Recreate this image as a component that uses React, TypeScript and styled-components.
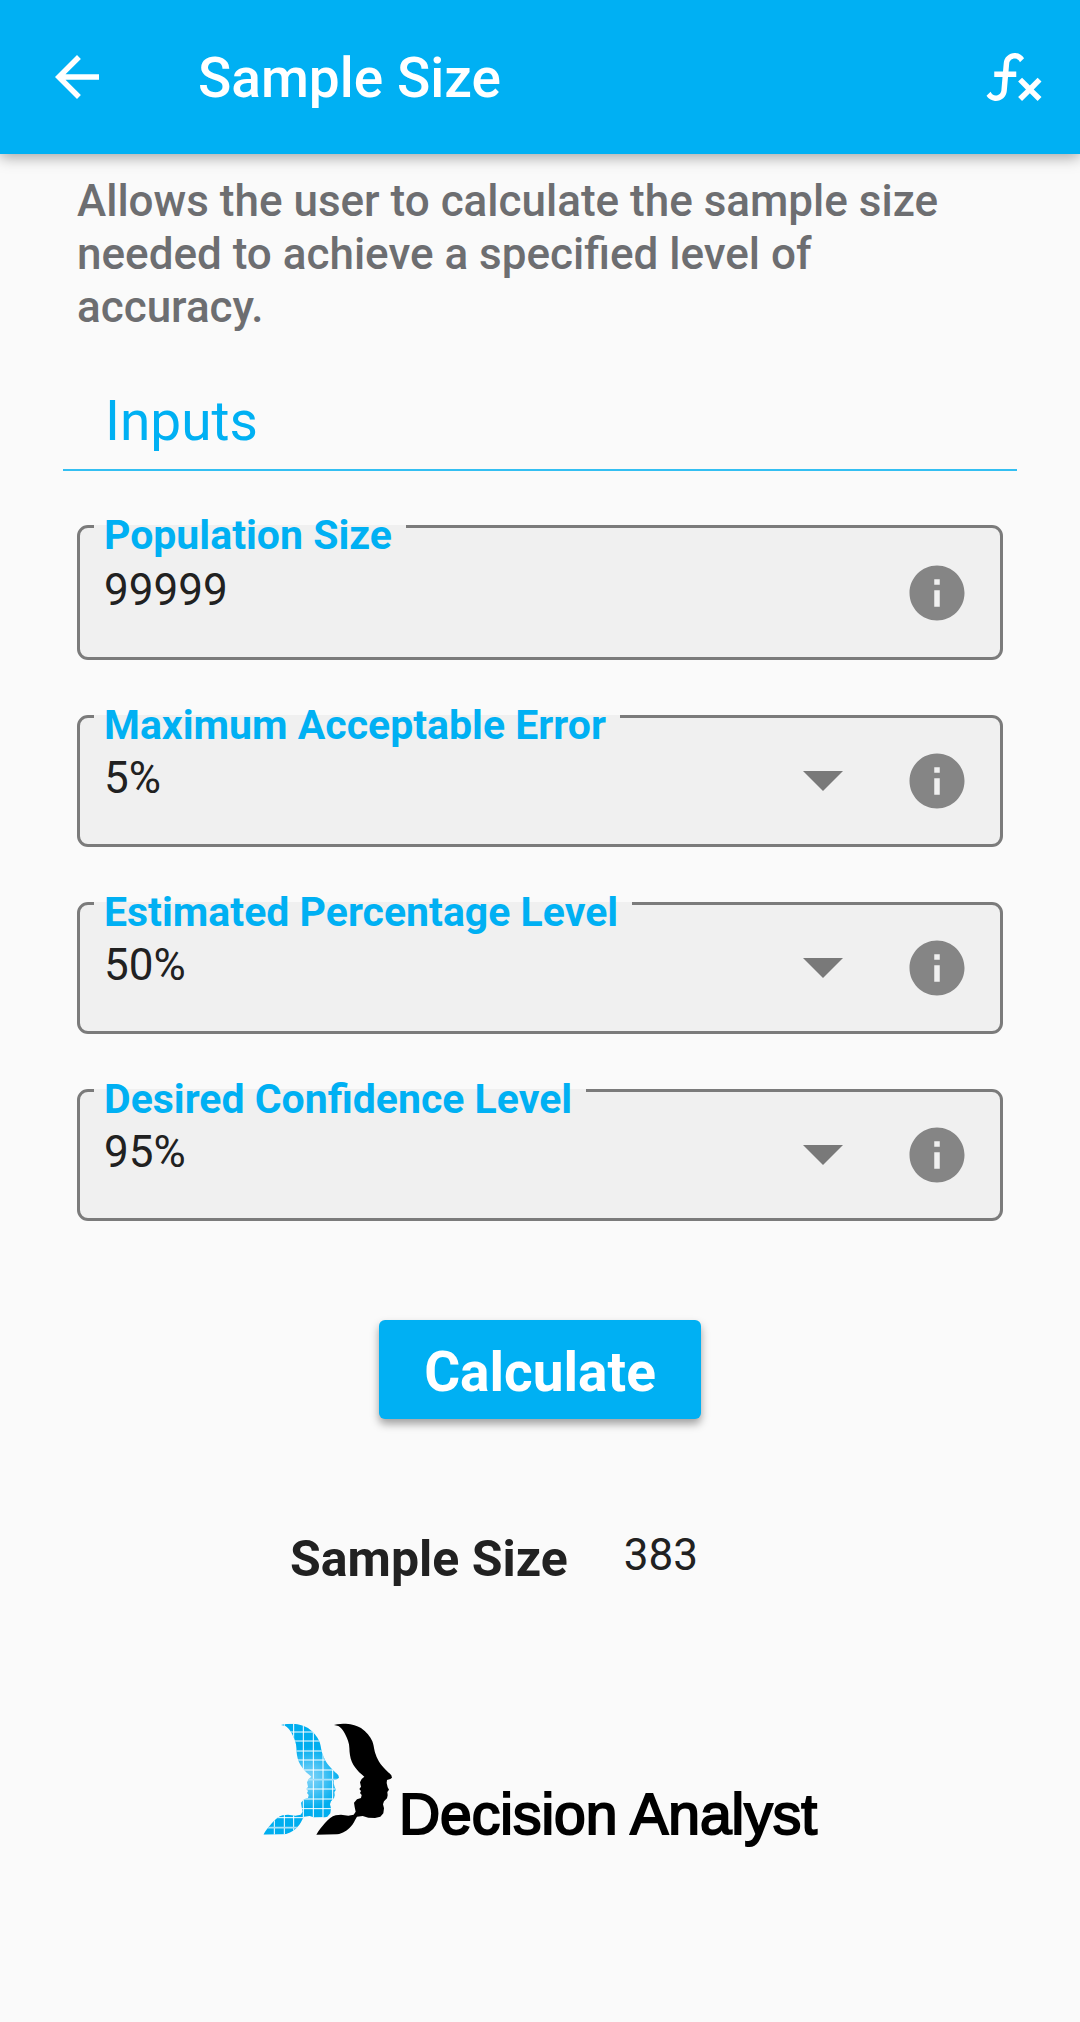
import React, { useState } from "react";
import styled, { createGlobalStyle } from "styled-components";
import { MdArrowBack, MdInfo } from "react-icons/md";

const BLUE = "#00b0f3";
const INK = "#212121";
const SURFACE = "#f0f0f0";
const OUTLINE = "#7b7b7b";

const GlobalStyle = createGlobalStyle`
  *, *::before, *::after { box-sizing: border-box; }
  body {
    margin: 0;
    background: #fafafa;
    color: ${INK};
    font-family: Roboto, "Noto Sans", sans-serif;
  }
  button, input, select { font: inherit; color: inherit; }
`;

const Page = styled.div`
  min-height: 100vh;
`;

const AppBar = styled.header`
  display: flex;
  align-items: center;
  padding: 44px 33px 44px 44px;
  background: ${BLUE};
  color: #fff;
  box-shadow: 0 3px 14px rgba(0, 0, 0, 0.36);
`;

const IconButton = styled.button`
  display: flex;
  flex: none;
  padding: 0;
  border: 0;
  background: none;
  cursor: pointer;
`;

const Title = styled.h1`
  flex: 1;
  margin: 0;
  padding: 2px 0 0 88px;
  font-size: 55px;
  line-height: 64px;
  font-weight: 500;
`;

const Content = styled.main`
  padding: 21px 77px 0;
`;

const Description = styled.p`
  margin: 0;
  color: #6d6e71;
  font-size: 44px;
  line-height: 53px;
  font-weight: 500;
`;

const SectionTitle = styled.h2`
  margin: 55px -14px 0;
  padding: 0 42px 16px;
  border-bottom: 2px solid #33bff2;
  color: ${BLUE};
  font-size: 55px;
  line-height: 64px;
  font-weight: 400;
`;

const Form = styled.form`
  display: flex;
  flex-direction: column;
  gap: 55px;
  padding-top: 54px;
`;

const FieldBox = styled.div<{ $tall?: boolean }>`
  position: relative;
  display: flex;
  align-items: center;
  height: ${(p) => (p.$tall ? 135 : 132)}px;
  padding: 0 30px 0 24px;
  border: 3px solid ${OUTLINE};
  border-radius: 11px;
  background: ${SURFACE};
  color: #858585;
`;

const FloatingLabel = styled.label`
  position: absolute;
  top: -3px;
  left: 14px;
  padding: 0 14px 0 10px;
  background: ${SURFACE};
  color: ${BLUE};
  font-size: 41px;
  line-height: 20px;
  font-weight: 700;
  white-space: nowrap;
`;

const Control = styled.input`
  flex: 1;
  min-width: 0;
  height: 100%;
  padding: 0 0 6px;
  border: 0;
  outline: 0;
  background: none;
  color: ${INK};
  font-size: 44px;
`;

const SelectWrap = styled.div`
  display: grid;
  flex: 1;
  height: 100%;
  align-items: center;
  margin-right: 61px;
  > * { grid-area: 1 / 1; }
`;

const Select = styled.select`
  width: 100%;
  height: 100%;
  padding: 0 0 6px;
  border: 0;
  outline: 0;
  appearance: none;
  background: none;
  color: ${INK};
  font-size: 44px;
`;

const Caret = styled.svg`
  justify-self: end;
  pointer-events: none;
  fill: #797979;
`;

const Submit = styled.button`
  align-self: center;
  margin-top: 44px;
  padding: 20px 45px 15px;
  border: 0;
  border-radius: 6px;
  background: ${BLUE};
  color: #fff;
  font-size: 55px;
  line-height: 64px;
  font-weight: 700;
  box-shadow: 0 5px 8px rgba(0, 0, 0, 0.36);
  cursor: pointer;
`;

const Result = styled.div`
  display: flex;
  align-items: flex-start;
  justify-content: center;
  gap: 56px;
  padding: 110px 92px 0 0;
`;

const ResultLabel = styled.span`
  font-size: 50px;
  line-height: 60px;
  font-weight: 700;
`;

const ResultValue = styled.output`
  font-size: 44px;
  line-height: 52px;
`;

const Brand = styled.div`
  display: flex;
  align-items: flex-end;
  justify-content: center;
  gap: 6px;
  padding: 134px 0 55px;
  color: #000;
`;

const BrandName = styled.span`
  font-family: "Liberation Sans", Arial, sans-serif;
  font-size: 57px;
  line-height: 42px;
  white-space: nowrap;
  -webkit-text-stroke: 2px #000;
`;

const PROFILE =
  "M249 46C262 42 274 42 285 42C304 43 318 48 330 55C346 66 358 80 364 95C370 112 369 122 374 134C380 154 394 172 410 186C414 190 419 193 421 197L423 204L418 208L408 211L407 220L410 233L414 240L409 247L410 257L408 266L399 275L396 284L399 296L397 311L388 321L372 325L352 324L335 319L318 321C310 334 307 343 299 351C290 361 275 371 258 374L196 375C203 363 213 350 222 340C233 328 242 320 254 317L270 315L292 318L308 315L314 306L311 292L309 279L318 269L330 265L332 256L327 250L330 244L325 238L330 231L327 218L332 208L340 201C328 192 320 184 312 173C304 162 299 150 297 137C294 123 297 108 291 93C283 72 274 56 262 49Z";

const COLUMNS = [70, 100, 128, 157, 187, 216, 245];
const ROWS = [67, 94, 124, 151, 181, 238, 268, 297, 324];

function Faces() {
  return (
    <svg width="130" height="112" viewBox="36 40 390 336" aria-hidden="true">
      <defs>
        <radialGradient id="glow" gradientUnits="userSpaceOnUse" cx="176" cy="205" r="92">
          <stop offset="0" stopColor="#7dd3f8" />
          <stop offset="0.35" stopColor="#5ac8f6" />
          <stop offset="1" stopColor="#00aeef" />
        </radialGradient>
        <clipPath id="profile">
          <path d={PROFILE} transform="translate(-159 0)" />
        </clipPath>
      </defs>
      <g clipPath="url(#profile)">
        <rect x="30" y="36" width="240" height="342" fill="url(#glow)" />
        <g stroke="#fff" strokeWidth="3">
          {COLUMNS.map((x) => (
            <path key={x} d={`M${x} 36V378`} />
          ))}
          {ROWS.map((y) => (
            <path key={y} d={`M30 ${y}H270`} />
          ))}
        </g>
        <path d="M30 210H270M30 354H270" stroke="#a8e1fa" strokeWidth="5" />
      </g>
      <path d={PROFILE} />
    </svg>
  );
}

function FunctionIcon() {
  return (
    <svg width="66" height="66" viewBox="0 0 24 24" fill="currentColor" aria-hidden="true">
      <path d="M12.42,5.29C11.32,5.19 10.35,6 10.25,7.11L10,10H12.82V12H9.82L9.38,17.07C9.18,19.27 7.24,20.9 5.04,20.7C3.79,20.59 2.66,19.9 2,18.83L3.5,17.33C3.83,18.38 4.96,18.97 6,18.63C6.78,18.39 7.33,17.7 7.4,16.89L7.82,12H4.82V10H8L8.27,6.93C8.46,4.73 10.39,3.1 12.6,3.28C13.86,3.39 15,4.09 15.66,5.17L14.16,6.67C13.91,5.9 13.23,5.36 12.42,5.29M22,13.65L20.59,12.24L17.76,15.07L14.93,12.24L13.5,13.65L16.35,16.5L13.5,19.31L14.93,20.72L17.76,17.89L20.59,20.72L22,19.31L19.17,16.5L22,13.65Z" />
    </svg>
  );
}

function InfoButton({ topic }: { topic: string }) {
  return (
    <IconButton type="button" aria-label={`About ${topic}`}>
      <MdInfo size={66} />
    </IconButton>
  );
}

interface SelectFieldProps {
  id: string;
  label: string;
  options: string[];
  initial: string;
}

function SelectField({ id, label, options, initial }: SelectFieldProps) {
  const [value, setValue] = useState(initial);
  return (
    <FieldBox>
      <FloatingLabel htmlFor={id}>{label}</FloatingLabel>
      <SelectWrap>
        <Select id={id} value={value} onChange={(e) => setValue(e.target.value)}>
          {options.map((o) => (
            <option key={o}>{o}</option>
          ))}
        </Select>
        <Caret width="40" height="20" viewBox="0 0 40 20" aria-hidden="true">
          <path d="M0 0H40L20 20Z" />
        </Caret>
      </SelectWrap>
      <InfoButton topic={label} />
    </FieldBox>
  );
}

export default function App() {
  const [population, setPopulation] = useState("99999");
  return (
    <Page>
      <GlobalStyle />
      <AppBar>
        <IconButton type="button" aria-label="Back">
          <MdArrowBack size={66} />
        </IconButton>
        <Title>Sample Size</Title>
        <IconButton type="button" aria-label="Formula">
          <FunctionIcon />
        </IconButton>
      </AppBar>
      <Content>
        <Description>
          Allows the user to calculate the sample size needed to achieve a specified level of accuracy.
        </Description>
        <SectionTitle>Inputs</SectionTitle>
        <Form onSubmit={(e) => e.preventDefault()}>
          <FieldBox $tall>
            <FloatingLabel htmlFor="population">Population Size</FloatingLabel>
            <Control
              id="population"
              inputMode="numeric"
              value={population}
              onChange={(e) => setPopulation(e.target.value)}
            />
            <InfoButton topic="Population Size" />
          </FieldBox>
          <SelectField
            id="error"
            label="Maximum Acceptable Error"
            options={["1%", "2%", "3%", "4%", "5%", "10%"]}
            initial="5%"
          />
          <SelectField
            id="percentage"
            label="Estimated Percentage Level"
            options={["10%", "20%", "30%", "40%", "50%"]}
            initial="50%"
          />
          <SelectField
            id="confidence"
            label="Desired Confidence Level"
            options={["80%", "90%", "95%", "99%"]}
            initial="95%"
          />
          <Submit type="submit">Calculate</Submit>
        </Form>
        <Result>
          <ResultLabel id="result-label">Sample Size</ResultLabel>
          <ResultValue aria-labelledby="result-label">383</ResultValue>
        </Result>
        <Brand>
          <Faces />
          <BrandName>Decision Analyst</BrandName>
        </Brand>
      </Content>
    </Page>
  );
}
